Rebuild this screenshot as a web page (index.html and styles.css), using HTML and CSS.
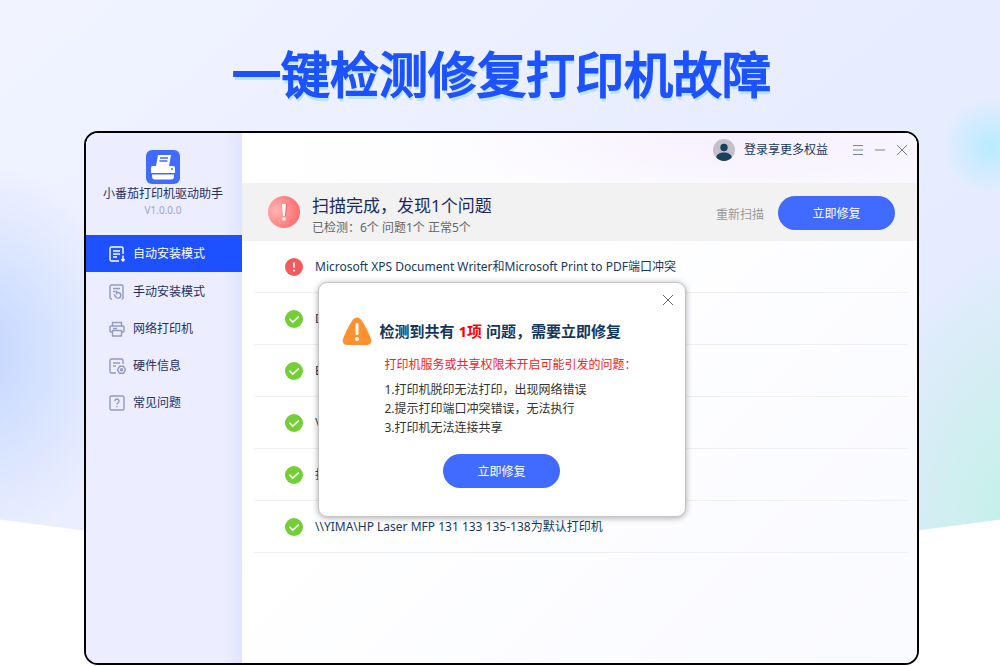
FILE: index.html
```
<!DOCTYPE html>
<html lang="zh-CN">
<head>
<meta charset="utf-8">
<title>一键检测修复打印机故障</title>
<link rel="stylesheet" href="styles.css">
</head>
<body>
<div class="backdrop"></div>
<div class="page">
  <h1 class="headline">一键检测修复打印机故障</h1>
  <div class="window">
    <aside class="sidebar">
      <div class="brand">
        <svg class="logo" viewBox="0 0 34 34" width="34" height="34" aria-hidden="true">
          <rect width="34" height="34" rx="6" fill="#416bff"/>
          <path d="M12 5h13l-2 11H10z" fill="#fff"/>
          <path d="M14 8h8M13.400 11h8" stroke="#416bff" stroke-width="1.300"/>
          <path d="M7 16h20a2 2 0 0 1 2 2v5H5v-5a2 2 0 0 1 2-2z" fill="#fff"/>
          <path d="M6 24.500h22v2a3 3 0 0 1-3 3H9a3 3 0 0 1-3-3z" fill="#fff"/>
          <circle cx="26" cy="19" r="1" fill="#416bff"/>
        </svg>
        <div class="brand-name">小番茄打印机驱动助手</div>
        <div class="version">V1.0.0.0</div>
      </div>
      <nav class="menu">
        <a class="menu-item active" href="#auto">
          <svg class="icon" viewBox="0 0 18 18" aria-hidden="true"><path d="M15 9V3.500A1.500 1.500 0 0 0 13.500 2h-10A1.500 1.500 0 0 0 2 3.500v11A1.500 1.500 0 0 0 3.500 16H11M5 6h7M5 9h7M5 12h4M15 10.500V16M13.300 14.300L15 16l1.700-1.700"/></svg>
          <span>自动安装模式</span></a>
        <a class="menu-item" href="#manual">
          <svg class="icon" viewBox="0 0 18 18" aria-hidden="true"><path d="M4 16H3.500A1.500 1.500 0 0 1 2 14.500v-11A1.500 1.500 0 0 1 3.500 2h10A1.500 1.500 0 0 1 15 3.500v11a1.500 1.500 0 0 1-1.500 1.500M5 5.500h7M5 8.500h2.500M8.500 11.500V7.500M8.500 9.500h1.700a2.800 2.800 0 1 1-2.700 4L6 11.500"/></svg>
          <span>手动安装模式</span></a>
        <a class="menu-item" href="#network">
          <svg class="icon" viewBox="0 0 18 18" aria-hidden="true"><path d="M4.500 6V2.500h9V6M4.500 12H3a1 1 0 0 1-1-1V7a1 1 0 0 1 1-1h12a1 1 0 0 1 1 1v4a1 1 0 0 1-1 1h-1.500M4.500 10.500h9V16h-9zM5 8.500h4"/></svg>
          <span>网络打印机</span></a>
        <a class="menu-item" href="#hardware">
          <svg class="icon" viewBox="0 0 18 18" aria-hidden="true"><path d="M15 7V3.500A1.500 1.500 0 0 0 13.500 2h-10A1.500 1.500 0 0 0 2 3.500v11A1.500 1.500 0 0 0 3.500 16H8M5 6h7M5 9h3M11.500 9.300h4l2 3.500-2 3.500h-4l-2-3.500z"/><circle cx="13.500" cy="12.800" r="1"/></svg>
          <span>硬件信息</span></a>
        <a class="menu-item" href="#faq">
          <svg class="icon" viewBox="0 0 18 18" aria-hidden="true"><rect x="2" y="2" width="14" height="14" rx="1.500"/><path d="M7 7.200C7 4.300 11 4.400 11 7c0 1.700-2 1.700-2 3.500M9 12v1.300"/></svg>
          <span>常见问题</span></a>
      </nav>
    </aside>
    <main class="content">
      <header class="topbar">
        <button class="account" type="button">
          <svg viewBox="0 0 22 22" width="22" height="22" aria-hidden="true"><circle cx="11" cy="11" r="11" fill="#c5c0cb"/><circle cx="11" cy="8.500" r="3.700" fill="#18405f"/><path d="M3.300 18.500C3.500 15 7 13.500 11 13.500s7.500 1.500 7.700 5A11 11 0 0 1 11 22a11 11 0 0 1-7.700-3.500z" fill="#18405f"/></svg>
          <span>登录享更多权益</span>
        </button>
        <div class="controls">
          <button type="button" aria-label="菜单"><svg viewBox="0 0 12 12"><path d="M1 1.500h10M1 6h10M1 10.500h10"/></svg></button>
          <button type="button" aria-label="最小化"><svg viewBox="0 0 12 12"><path d="M1 6h10"/></svg></button>
          <button type="button" aria-label="关闭"><svg viewBox="0 0 12 12"><path d="M1 1l10 10M11 1L1 11"/></svg></button>
        </div>
      </header>
      <section class="summary">
        <svg class="alert" viewBox="0 0 32 32" width="32" height="32" aria-hidden="true">
          <defs><radialGradient id="glow" cx=".25" cy=".45" r=".8"><stop offset="0" stop-color="#ffb4b4"/><stop offset="1" stop-color="#ff6769"/></radialGradient></defs>
          <circle cx="16" cy="16" r="16" fill="url(#glow)"/>
          <path d="M15 8h4l-1 12h-2z" fill="#e96064"/><path d="M14 8h4l-1 12h-2z" fill="#fff"/><circle cx="16" cy="23" r="1.800" fill="#fff"/>
        </svg>
        <div class="summary-text">
          <h2>扫描完成，发现1个问题</h2>
          <p>已检测：6个 问题1个 正常5个</p>
        </div>
        <button class="rescan" type="button">重新扫描</button>
        <button class="primary" type="button">立即修复</button>
      </section>
      <ul class="checks">
        <li><svg class="mark" viewBox="0 0 18 18" aria-hidden="true"><circle cx="9" cy="9" r="9" fill="#f25a5c"/><path d="M8 4.500h2L9.600 10H8.400z" fill="#fff"/><circle cx="9" cy="12.500" r="1.100" fill="#fff"/></svg><span>Microsoft XPS Document Writer和Microsoft Print to PDF端口冲突</span></li>
        <li><svg class="mark" viewBox="0 0 18 18" aria-hidden="true"><circle cx="9" cy="9" r="9" fill="#74ce35"/><path class="tick" d="M4.500 8.800l3.300 3.300 6-5.600"/></svg><span>D</span></li>
        <li><svg class="mark" viewBox="0 0 18 18" aria-hidden="true"><circle cx="9" cy="9" r="9" fill="#74ce35"/><path class="tick" d="M4.500 8.800l3.300 3.300 6-5.600"/></svg><span>E</span></li>
        <li><svg class="mark" viewBox="0 0 18 18" aria-hidden="true"><circle cx="9" cy="9" r="9" fill="#74ce35"/><path class="tick" d="M4.500 8.800l3.300 3.300 6-5.600"/></svg><span>\\</span></li>
        <li><svg class="mark" viewBox="0 0 18 18" aria-hidden="true"><circle cx="9" cy="9" r="9" fill="#74ce35"/><path class="tick" d="M4.500 8.800l3.300 3.300 6-5.600"/></svg><span>打</span></li>
        <li><svg class="mark" viewBox="0 0 18 18" aria-hidden="true"><circle cx="9" cy="9" r="9" fill="#74ce35"/><path class="tick" d="M4.500 8.800l3.300 3.300 6-5.600"/></svg><span>\\YIMA\HP Laser MFP 131 133 135-138为默认打印机</span></li>
      </ul>
    </main>
    <div class="dialog" role="dialog" aria-labelledby="dialog-title">
      <button class="close" type="button" aria-label="关闭"><svg viewBox="0 0 12 12"><path d="M1 1l10 10M11 1L1 11"/></svg></button>
      <div class="dialog-head">
        <svg viewBox="0 0 30 28" width="30" height="28" aria-hidden="true"><path d="M11 2.500Q15-1.500 19 2.500Q25 11 29.200 22.500Q30 27.500 25 28H5Q0 27.500 .8 22.500Q5 11 11 2.500z" fill="#ff902f"/><rect x="13.500" y="6" width="3" height="12" rx="1.500" fill="#fff"/><circle cx="15" cy="22" r="2" fill="#fff"/></svg>
        <h3 id="dialog-title">检测到共有 <em>1项</em> 问题，需要立即修复</h3>
      </div>
      <div class="dialog-body">
        <p class="warning">打印机服务或共享权限未开启可能引发的问题：</p>
        <p>1.打印机脱印无法打印，出现网络错误</p>
        <p>2.提示打印端口冲突错误，无法执行</p>
        <p>3.打印机无法连接共享</p>
      </div>
      <button class="primary" type="button">立即修复</button>
    </div>
  </div>
</div>
</body>
</html>
```
FILE: styles.css
```
* { box-sizing: border-box; }

body {
  margin: 0;
  background: #fff;
  color: #16395a;
  font: 12px/18px "Noto Sans", "Noto Sans CJK SC", sans-serif;
}

h1, h2, h3, p, ul { margin: 0; padding: 0; }
h2 { font-weight: 400; }

button {
  border: 0;
  padding: 0;
  background: none;
  color: inherit;
  font: inherit;
  cursor: pointer;
}

.backdrop {
  position: absolute;
  inset: 0;
  z-index: -1;
  clip-path: polygon(0 0, 100% 0, 100% 78%, 50% 88%, 0 78%);
  background:
    radial-gradient(circle 48px at 99% 22%, #b8ebff, #b8ebff00),
    radial-gradient(ellipse 180px 300px at 103% 80%, #bff2e4, #bff2e400),
    radial-gradient(ellipse 150px 190px at -2% 53%, #c3d6ff, #c3d6ff00),
    linear-gradient(140deg, #f1f4ff, #e8edff 50%, #e2e9ff);
}

.page {
  display: flex;
  flex-direction: column;
  min-height: 100vh;
  padding: 35px 81px 1px 84px;
}

.headline {
  height: 96px;
  text-align: center;
  color: #1d52ff;
  font: 400 49px/74px "Noto Sans CJK SC", sans-serif;
  -webkit-text-stroke: 2px #1d52ff;
  stroke-linejoin: round;
  text-shadow: 1px 4px 0 #bce3f2;
}

.window {
  position: relative;
  flex: 1;
  display: flex;
  overflow: hidden;
  border: 2px solid #000;
  border-radius: 14px;
  background: #fff;
}

.sidebar {
  width: 156px;
  flex: none;
  background: linear-gradient(90deg, #eceeff 88%, #e0e5ff);
}

.brand {
  display: flex;
  flex-direction: column;
  align-items: center;
  height: 102px;
  padding: 17px 2px 0 0;
  color: #26305e;
}

.brand-name { margin-top: 1px; }

.version {
  font-size: 10px;
  line-height: 14px;
  color: #a0a4bf;
}

.menu-item {
  display: flex;
  align-items: center;
  gap: 7px;
  height: 37px;
  padding-left: 22px;
  color: #26305e;
  text-decoration: none;
}

.menu-item.active {
  margin-bottom: 1px;
  background: #1d50ff;
  color: #fff;
}

.icon {
  width: 18px;
  height: 18px;
  fill: none;
  stroke: #939ac0;
  stroke-width: 1.4;
  stroke-linejoin: round;
}

.active .icon { stroke: #fff; }

.content {
  flex: 1;
  min-width: 0;
  background: linear-gradient(135deg, #fff 35%, #f9faff);
}

.topbar {
  display: flex;
  justify-content: flex-end;
  gap: 24px;
  height: 50px;
  padding: 6px 9px 0 0;
  background: radial-gradient(ellipse 300px 80px at 75% 0, #f7f0ff, #fafaff00), linear-gradient(90deg, #fff, #faf9ff);
}

.account {
  display: flex;
  align-items: center;
  gap: 9px;
  height: 22px;
}

.controls {
  display: flex;
  gap: 10px;
  height: 22px;
}

.controls svg, .close svg {
  display: block;
  width: 12px;
  height: 12px;
  fill: none;
  stroke: #73869d;
}

.summary {
  display: flex;
  align-items: center;
  height: 58px;
  padding: 6px 22px 0 26px;
  background: #f2f2f2;
}

.alert { margin-bottom: 6px; }

.summary-text {
  flex: 1;
  margin-left: 12px;
}

.summary h2 {
  color: #1c2a5e;
  font-size: 17px;
  line-height: 26px;
}

.summary p { color: #666; }

.rescan {
  margin-right: 14px;
  color: #999;
}

.primary {
  width: 117px;
  height: 34px;
  padding-top: 2px;
  border-radius: 17px;
  background: #416bff;
  color: #fff;
}

.checks {
  padding: 0 9px 0 12px;
  list-style: none;
}

.checks li {
  display: flex;
  align-items: center;
  gap: 12px;
  height: 52px;
  padding-left: 31px;
  border-bottom: 1px solid #eff0f4;
}

.summary .primary { margin-bottom: 4px; }

.mark {
  width: 18px;
  height: 18px;
}

.tick {
  fill: none;
  stroke: #fff;
  stroke-width: 1.6;
}

.dialog {
  position: absolute;
  inset: 2px 0 0;
  margin: auto;
  width: 368px;
  height: fit-content;
  padding: 11px 11px 28px;
  border: 1px solid #c4c4c4;
  border-radius: 9px;
  background: #fff;
  box-shadow: 0 1px 6px #0005;
  text-align: center;
}

.close {
  display: block;
  margin-left: auto;
}

.close svg { stroke: #666; }

.dialog-head {
  display: flex;
  align-items: center;
  gap: 8px;
  margin: 11px 0 0 12px;
}

.dialog h3 {
  color: #12375c;
  font-size: 15px;
  line-height: 28px;
}

.dialog em {
  color: #f00;
  font-style: normal;
}

.dialog-body {
  margin: 10px 0 17px 55px;
  color: #333;
  line-height: 19px;
  text-align: left;
}

.dialog-body .warning {
  margin-bottom: 6px;
  color: #f12222;
}
```
